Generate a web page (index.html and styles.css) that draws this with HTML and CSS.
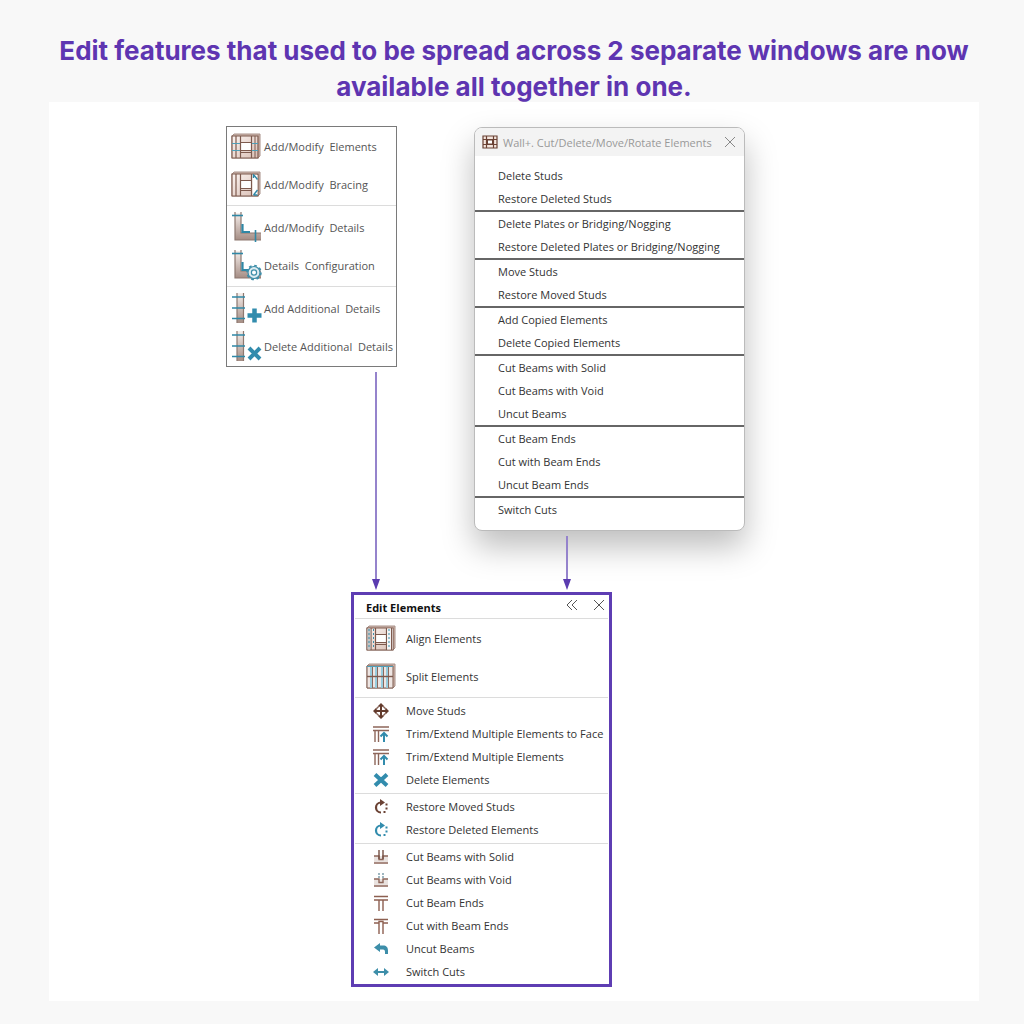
FILE: index.html
```html
<!DOCTYPE html>
<html lang="en">
<head>
  <meta charset="UTF-8">
  <meta name="viewport" content="width=device-width, initial-scale=1.0">
  <title>Edit Elements</title>
  <link rel="stylesheet" href="styles.css">
</head>
<body>
  <!-- icon set -->
  <svg class="icon-defs" width="0" height="0" aria-hidden="true">
    <defs>
      <linearGradient id="wood" x1="0" y1="0" x2="1" y2="1">
        <stop offset="0" stop-color="#fbf3f0" />
        <stop offset="1" stop-color="#d9bfb5" />
      </linearGradient>
      <linearGradient id="post" x1="0" y1="0" x2="0" y2="1">
        <stop offset="0" stop-color="#f6efec" />
        <stop offset="1" stop-color="#a58d84" />
      </linearGradient>
    </defs>

    <symbol id="frame" viewBox="0 0 30 26">
      <path d="M1 3 3 1h26v22l-2 2H1z" fill="#cdb4aa" stroke="#a89088" />
      <path d="M1 3h26v22H1z" fill="url(#wood)" stroke="#7d5a4e" stroke-width="1.2" />
      <path d="M10 9.500h10v8H10z" fill="#fff" />
      <path d="M5 3v22M9.500 3v22M20.500 3v22M9.500 9.500h11M9.500 17.500h11M9.500 19.500h11" fill="none" stroke="#7d5a4e" stroke-width="1.200" />
    </symbol>

    <symbol id="elements" viewBox="0 0 30 26">
      <use href="#frame" />
      <path d="M24 3v22" stroke="#7d5a4e" />
      <path d="M1 10.500h8M1 17.500h8M21 10.500h6M21 17.500h6" stroke="#4f9fb8" />
    </symbol>

    <symbol id="bracing" viewBox="0 0 30 26">
      <use href="#frame" />
      <path d="M21.500 4h5v20h-5z" fill="#fff" />
      <path d="M22.500 3.500l4 5M26.500 19l-4 5M22.500 3v4M22.500 24h4" fill="none" stroke="#2f88a6" stroke-width="1.400" />
    </symbol>

    <symbol id="align" viewBox="0 0 30 26">
      <use href="#frame" />
      <path d="M1.500 3.500h3v21h-3z" fill="#c5c4c4" />
      <path d="M21 3.500h5.500v21H21z" fill="#f4f5f6" />
      <path d="M25.500 3v22" stroke="#7d5a4e" />
      <path d="M3 4v20M7.500 4v20M23 4v20" stroke="#3d8ea9" stroke-dasharray="2 2" />
    </symbol>

    <symbol id="split" viewBox="0 0 30 26">
      <path d="M1 3 3 1h26v22l-2 2H1z" fill="#cdb4aa" stroke="#a89088" />
      <path d="M1 3h26v22H1z" fill="#eee5e2" stroke="#7d5a4e" />
      <path d="M6.500 3v22M11.500 3v22M17.500 3v22M22.500 3v22" stroke="#8a685c" />
      <path d="M5 3v22M10 3v22M16 3v22M21 3v22" stroke="#8ec9dc" stroke-width="1.800" />
      <path d="M1 13.500h26" stroke="#7d5a4e" stroke-width="1.400" />
      <path d="M1 3.500h26" stroke="#4f9fb8" />
    </symbol>

    <symbol id="corner" viewBox="0 0 32 32">
      <path d="M4 2h6v20h20v7H4z" fill="url(#post)" />
      <path d="M4 1v28h26M10 1v21h20" fill="none" stroke="#8d7870" stroke-width="1.200" />
      <path d="M1 4.500h11" stroke="#2f88a6" stroke-width="1.600" />
      <path d="M11.500 13v8H19" fill="none" stroke="#2f88a6" stroke-width="2.200" />
    </symbol>

    <symbol id="details" viewBox="0 0 32 32">
      <use href="#corner" />
      <path d="M24.500 19v12" stroke="#2f88a6" stroke-width="1.600" />
    </symbol>

    <symbol id="config" viewBox="0 0 32 32">
      <use href="#corner" />
      <circle cx="23" cy="23.500" r="6" fill="#dcebf0" stroke="#3d8ea9" stroke-width="1.200" />
      <circle cx="23" cy="23.500" r="7" fill="none" stroke="#3d8ea9" stroke-width="1.600" stroke-dasharray="2.750 2.750" />
      <circle cx="23" cy="23.500" r="2.600" fill="#fff" stroke="#3d8ea9" stroke-width="1.200" />
    </symbol>

    <symbol id="rail" viewBox="0 0 32 32">
      <path d="M6 1h6v30H6z" fill="url(#post)" />
      <path d="M6 1v30M12.500 1v30" stroke="#8d7870" stroke-width="1.200" />
      <path d="M1 5h13M1 16h13M1 26.500h13" stroke="#2f88a6" stroke-width="1.600" />
    </symbol>

    <symbol id="rail-add" viewBox="0 0 32 32">
      <use href="#rail" />
      <path d="M23.500 16.500v14M16.500 23.500h14" stroke="#328cad" stroke-width="4.500" />
    </symbol>

    <symbol id="rail-delete" viewBox="0 0 32 32">
      <use href="#rail" />
      <path d="M18 18l11 11M29 18l-11 11" stroke="#328cad" stroke-width="4" />
    </symbol>

    <symbol id="wall" viewBox="0 0 16 14">
      <path d="M1 1h14v12H1zM1 4.500h14M1 9.500h14M4.500 1v12M11.500 1v12" fill="#f5e7df" stroke="#6b4234" stroke-width="1.200" />
      <path d="M5.500 5h5v4h-5z" fill="#fff" stroke="#6b4234" />
    </symbol>

    <symbol id="move" viewBox="0 0 16 16">
      <circle cx="8" cy="8" r="5" fill="#fff" stroke="#8a685c" stroke-width="1.400" />
      <path d="M8 2v12M2 8h12" stroke="#633b2d" stroke-width="2" />
      <path d="M8 0l3 3H5zM8 16l3-3H5zM0 8l3-3v6zM16 8l-3-3v6z" fill="#633b2d" />
    </symbol>

    <symbol id="trim" viewBox="0 0 16 16">
      <path d="M0 1h16M0 4.500h16" stroke="#8d665a" stroke-width="1.400" />
      <path d="M2 5v11M5.500 5v11" stroke="#8d665a" stroke-width="1.400" />
      <path d="M11 16V7M7.500 10.500 11 7l3.500 3.500" fill="none" stroke="#328cad" stroke-width="2" />
    </symbol>

    <symbol id="delete" viewBox="0 0 16 16">
      <path d="M2 2.500l12 11M14 2.500l-12 11" stroke="#328cad" stroke-width="4" />
    </symbol>

    <symbol id="restore" viewBox="0 0 16 16">
      <path d="M8 3.500a5 5 0 1 0 0 10" fill="none" stroke="currentColor" stroke-width="2.200" />
      <path d="M7 0l5 3.500L7 7z" fill="currentColor" />
      <path d="M12.500 4.500h2v2h-2zM12.500 8.500h2v2h-2zM10.500 12h2v2h-2z" fill="currentColor" />
    </symbol>

    <symbol id="cut" viewBox="0 0 16 16">
      <path d="M1 7h14v6H1z" fill="#e9e2df" />
      <path d="M1 7h5v3.500h4V7h5M1 14h14" fill="none" stroke="#8d665a" stroke-width="1.400" />
    </symbol>

    <symbol id="cut-solid" viewBox="0 0 16 16">
      <use href="#cut" />
      <path d="M6 1v9M10 1v9" stroke="#765043" stroke-width="1.400" />
    </symbol>

    <symbol id="cut-void" viewBox="0 0 16 16">
      <use href="#cut" />
      <path d="M6 1v6M10 1v6" stroke="#5f8797" stroke-width="1.200" stroke-dasharray="2 1" />
    </symbol>

    <symbol id="beam-end" viewBox="0 0 16 16">
      <path d="M1 1.500h14M1 5h14M6 5v11M10 5v11" stroke="#8d5f50" stroke-width="1.400" />
    </symbol>

    <symbol id="beam-with" viewBox="0 0 16 16">
      <path d="M1 1.500h14M1 5h5M10 5h5M6 16V3.500h4V16" fill="none" stroke="#8d5f50" stroke-width="1.400" />
    </symbol>

    <symbol id="uncut" viewBox="0 0 16 16">
      <path d="M1 6.500 7 2v2.500h3c3.500 0 5 2 5 5V13h-3v-2c0-1.500-.5-2.500-2-2.500H7V11z" fill="#3d8ea9" />
    </symbol>

    <symbol id="switch" viewBox="0 0 16 16">
      <path d="M3 8h10" stroke="#3d8ea9" stroke-width="2" />
      <path d="M0 8l5-4v8zM16 8l-5-4v8z" fill="#3d8ea9" />
    </symbol>
  </svg>

  <h1>Edit features that used to be spread across 2 separate windows are now available all together in one.</h1>

  <main class="board">
    <div class="diagram">
      <div class="sources">
        <div class="source">
          <nav class="menu">
            <button class="item big"><svg class="icon-frame"><use href="#elements" /></svg>Add/Modify&nbsp; Elements</button>
            <button class="item big"><svg class="icon-frame"><use href="#bracing" /></svg>Add/Modify&nbsp; Bracing</button>
            <hr>
            <button class="item big"><svg class="icon-detail"><use href="#details" /></svg>Add/Modify&nbsp; Details</button>
            <button class="item big"><svg class="icon-detail"><use href="#config" /></svg>Details&nbsp; Configuration</button>
            <hr>
            <button class="item big"><svg class="icon-detail"><use href="#rail-add" /></svg>Add Additional&nbsp; Details</button>
            <button class="item big"><svg class="icon-detail"><use href="#rail-delete" /></svg>Delete Additional&nbsp; Details</button>
          </nav>
          <div class="arrow arrow-left"></div>
        </div>

        <div class="source">
          <section class="dialog">
            <header class="dialog-header">
              <svg class="icon-wall"><use href="#wall" /></svg>
              <h2>Wall+. Cut/Delete/Move/Rotate Elements</h2>
              <button class="close" aria-label="Close">
                <svg viewBox="0 0 10 10"><path d="M0 0l10 10M10 0 0 10" /></svg>
              </button>
            </header>
            <div class="dialog-body">
              <button class="item">Delete Studs</button>
              <button class="item">Restore Deleted Studs</button>
              <hr>
              <button class="item">Delete Plates or Bridging/Nogging</button>
              <button class="item">Restore Deleted Plates or Bridging/Nogging</button>
              <hr>
              <button class="item">Move Studs</button>
              <button class="item">Restore Moved Studs</button>
              <hr>
              <button class="item">Add Copied Elements</button>
              <button class="item">Delete Copied Elements</button>
              <hr>
              <button class="item">Cut Beams with Solid</button>
              <button class="item">Cut Beams with Void</button>
              <button class="item">Uncut Beams</button>
              <hr>
              <button class="item">Cut Beam Ends</button>
              <button class="item">Cut with Beam Ends</button>
              <button class="item">Uncut Beam Ends</button>
              <hr>
              <button class="item">Switch Cuts</button>
            </div>
          </section>
          <div class="arrow arrow-right"></div>
        </div>
      </div>

      <section class="panel">
        <header class="panel-header">
          <h2>Edit Elements</h2>
          <button class="close" aria-label="Collapse">
            <svg viewBox="0 0 10 10"><path d="M5 0 0 5l5 5M10 0 5 5l5 5" /></svg>
          </button>
          <button class="close" aria-label="Close">
            <svg viewBox="0 0 10 10"><path d="M0 0l10 10M10 0 0 10" /></svg>
          </button>
        </header>
        <button class="item big"><svg class="icon-frame"><use href="#align" /></svg>Align Elements</button>
        <button class="item big"><svg class="icon-frame"><use href="#split" /></svg>Split Elements</button>
        <hr>
        <button class="item"><svg class="icon"><use href="#move" /></svg>Move Studs</button>
        <button class="item"><svg class="icon"><use href="#trim" /></svg>Trim/Extend Multiple Elements to Face</button>
        <button class="item"><svg class="icon"><use href="#trim" /></svg>Trim/Extend Multiple Elements</button>
        <button class="item"><svg class="icon"><use href="#delete" /></svg>Delete Elements</button>
        <hr>
        <button class="item"><svg class="icon brown"><use href="#restore" /></svg>Restore Moved Studs</button>
        <button class="item"><svg class="icon blue"><use href="#restore" /></svg>Restore Deleted Elements</button>
        <hr>
        <button class="item"><svg class="icon"><use href="#cut-solid" /></svg>Cut Beams with Solid</button>
        <button class="item"><svg class="icon"><use href="#cut-void" /></svg>Cut Beams with Void</button>
        <button class="item"><svg class="icon"><use href="#beam-end" /></svg>Cut Beam Ends</button>
        <button class="item"><svg class="icon"><use href="#beam-with" /></svg>Cut with Beam Ends</button>
        <button class="item"><svg class="icon"><use href="#uncut" /></svg>Uncut Beams</button>
        <button class="item"><svg class="icon"><use href="#switch" /></svg>Switch Cuts</button>
      </section>
    </div>
  </main>
</body>
</html>
```
FILE: styles.css
```css
* {
  box-sizing: border-box;
}
body {
  margin: 0;
  padding: 33px 45px 23px 49px;
  background-color: #f8f8f8;
  font-family: "Open Sans", "Noto Sans", sans-serif;
  font-size: 11px;
  color: #333;
}
.icon-defs {
  position: absolute;
}
h1 {
  margin: 0 -10px -3px;
  font-family: Inter, sans-serif;
  font-size: 26px;
  font-weight: 700;
  font-optical-sizing: none;
  line-height: 36px;
  text-align: center;
  color: #5e35b1;
}
h2 {
  flex: 1;
  margin: 0;
  font-size: 11px;
  white-space: nowrap;
}
.board {
  display: flex;
  justify-content: center;
  padding: 24px 57px 14px 0;
  background-color: #fff;
}
.sources {
  display: flex;
  gap: 77px;
}
.source {
  display: flex;
  flex-direction: column;
}

/* shared menu rows */
.item {
  display: flex;
  align-items: center;
  width: 100%;
  height: 23px;
  padding: 0;
  border: none;
  background: none;
  font: inherit;
  color: inherit;
  white-space: nowrap;
  cursor: pointer;
}
.item.big {
  height: 38px;
}
hr {
  height: 1px;
  margin: 2px 0;
  border: none;
  background-color: #dcdcdc;
}
svg {
  flex: none;
}
.icon {
  width: 16px;
  height: 16px;
}
.icon-frame {
  width: 30px;
  height: 26px;
}
.icon-detail {
  width: 32px;
  height: 32px;
}
.icon-wall {
  width: 16px;
  height: 14px;
}
.brown {
  color: #6b4234;
}
.blue {
  color: #328cad;
}
.close {
  display: flex;
  padding: 0;
  border: none;
  background: none;
  cursor: pointer;
}
.close svg {
  width: 10px;
  height: 10px;
  overflow: visible;
  fill: none;
  stroke: #555;
}

/* ribbon menu */
.menu {
  width: 171px;
  padding-bottom: 1px;
  border: 1px solid #7a7a7a;
  color: #555;
}
.menu .item {
  padding-left: 4px;
}
.menu .icon-frame {
  margin-right: 3px;
}
.menu .icon-detail {
  margin-right: 1px;
}

/* old dialog */
.dialog {
  width: 271px;
  margin-top: 1px;
  border: 1px solid #bbb;
  border-radius: 8px;
  background-color: #fff;
  box-shadow: 0 16px 32px rgba(0, 0, 0, 0.26);
}
.dialog-header {
  display: flex;
  align-items: center;
  gap: 5px;
  height: 28px;
  padding: 0 9px 0 7px;
  border-radius: 7px 7px 0 0;
  background-color: #f3f3f3;
}
.dialog-header h2 {
  font-weight: 400;
  color: #999;
}
.dialog-header .close svg {
  stroke: #888;
}
.dialog-body {
  padding: 8px 0 9px;
}
.dialog .item {
  padding-left: 23px;
}
.dialog hr {
  height: 2px;
  margin: 0;
  background-color: #666;
}

/* arrows down to the new panel */
.arrow {
  display: flex;
  flex: 1;
  flex-direction: column;
  align-items: center;
  width: 10px;
  min-height: 54px;
  margin: 5px 0 2px;
  z-index: 1;
}
.arrow::before {
  content: "";
  flex: 1;
  width: 2px;
  background-color: #9583cc;
}
.arrow::after {
  content: "";
  border: 4px solid transparent;
  border-top: 11px solid #5b3cb0;
  border-bottom: none;
}
.arrow-left {
  margin-left: 145px;
}
.arrow-right {
  margin-left: 88px;
}

/* new panel */
.panel {
  position: relative;
  width: 261px;
  margin-left: 125px;
  padding-bottom: 1px;
  border: 3px solid #5e3db3;
  background-color: #fff;
}
.panel-header {
  display: flex;
  align-items: center;
  gap: 17px;
  height: 24px;
  margin: 0 1px;
  padding: 0 4px 4px 11px;
  border-bottom: 1px solid #dcdcdc;
}
.panel-header h2 {
  padding-top: 6px;
  color: #111;
}
.panel .item {
  padding-left: 19px;
}
.panel .item.big {
  padding-left: 12px;
}
.panel .icon {
  margin-right: 17px;
}
.panel .icon-frame {
  margin-right: 10px;
}
.panel hr {
  margin: 2px 1px 1px;
}
```
